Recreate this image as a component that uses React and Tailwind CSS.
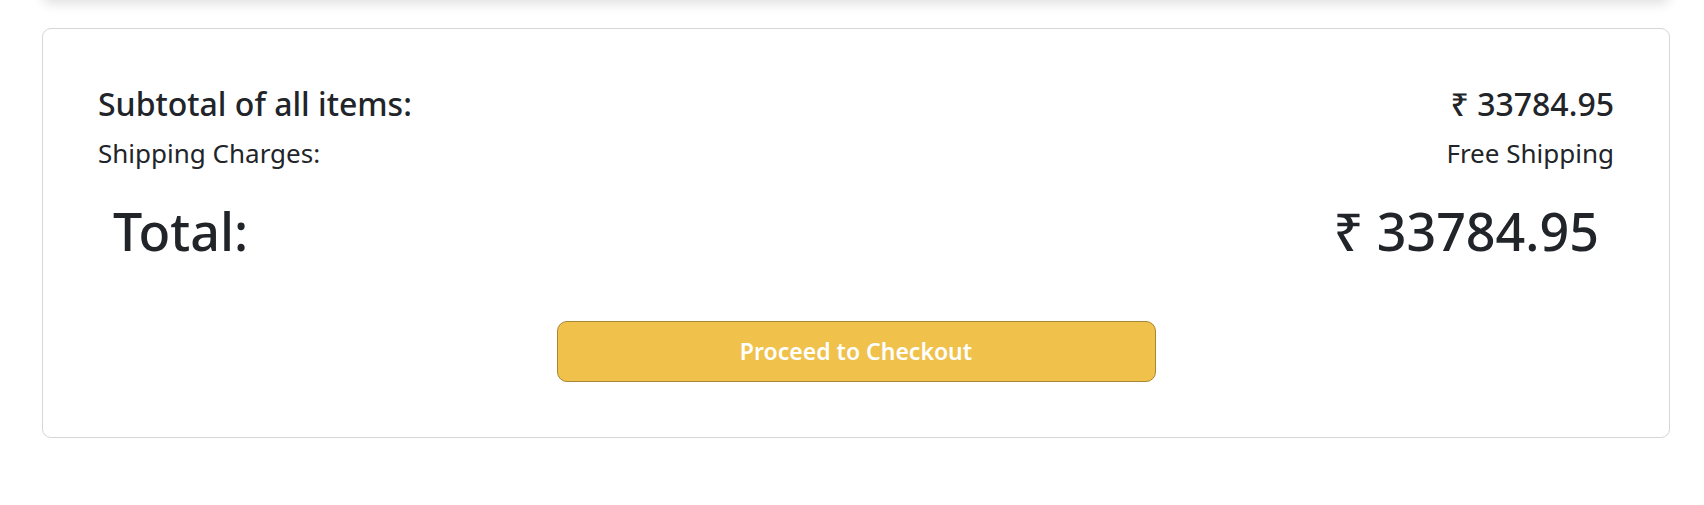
import React from 'react'

const price = '₹ 33784.95'

const App = () => {
    return (
        <div className="min-h-[505px] bg-white pl-[42px] pr-[34px] text-[#212529] font-['Noto_Sans','Open_Sans',sans-serif]">
            {/* bottom edge of the card above */}
            <div className="-mt-[40px] h-[40px] rounded-[9px] bg-white shadow-[0_4px_12px_rgba(0,0,0,0.12)]" />

            {/* Summary card */}
            <div className="mt-[28px] rounded-[9px] border border-[#d6d6d6] px-[55px] pt-[56px] pb-[55px]">
                <div className="flex items-baseline justify-between">
                    <h4 className="text-[32px] leading-[1.2] font-medium">Subtotal of all items:</h4>
                    <span className="text-[32px] leading-[1.2] font-medium">{price}</span>
                </div>
                <div className="mt-[11px] flex items-baseline justify-between">
                    <h6 className="text-[26px] leading-[1.5]">Shipping Charges:</h6>
                    <span className="text-[26px] leading-[1.5]">Free Shipping</span>
                </div>
                <div className="mt-[27px] flex items-baseline justify-between px-[15px]">
                    <h1 className="text-[52px] leading-[1.2] font-medium">Total:</h1>
                    <span className="text-[52px] leading-[1.2] font-medium">{price}</span>
                </div>
                <div className="mt-[58px] flex justify-center">
                    <button className="h-[61px] w-[599px] rounded-[10px] border border-[#a88734] bg-[#f0c14b] text-[23px] font-semibold text-white">
                        Proceed to Checkout
                    </button>
                </div>
            </div>
        </div>
    )
}

export default App
